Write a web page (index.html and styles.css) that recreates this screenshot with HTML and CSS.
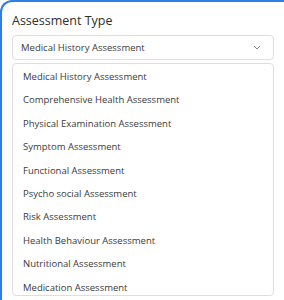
FILE: index.html
```html
<!DOCTYPE html>
<html>
<head>
<meta charset="utf-8">
<link rel="stylesheet" href="styles.css">
</head>
<body>
<div class="card">
  <div class="label">Assessment Type</div>
  <div class="select">
    <span class="value">Medical History Assessment</span>
    <svg class="chev" width="8" height="5" viewBox="0 0 8 5"><path d="M1 1 L4 4 L7 1" fill="none" stroke="#8a8a8a" stroke-width="1"/></svg>
  </div>
  <ul class="menu">
    <li>Medical History Assessment</li>
    <li>Comprehensive Health Assessment</li>
    <li>Physical Examination Assessment</li>
    <li>Symptom Assessment</li>
    <li>Functional Assessment</li>
    <li>Psycho social Assessment</li>
    <li>Risk Assessment</li>
    <li>Health Behaviour Assessment</li>
    <li>Nutritional Assessment</li>
    <li>Medication Assessment</li>
  </ul>
</div>
</body>
</html>
```
FILE: styles.css
```css
html, body { margin: 0; padding: 0; background: #fff; overflow: hidden; }
body { width: 284px; height: 300px; font-family: "Open Sans", "Noto Sans", sans-serif; }
.card {
  box-sizing: border-box;
  width: 320px;
  height: 340px;
  border-top: 2px solid #2f7ee8;
  border-left: 2px solid #2f7ee8;
  border-top-left-radius: 12px;
  padding: 11px 0 0 10px;
}
.label {
  font-size: 12.5px;
  font-weight: 500;
  color: #2e2e2e;
  line-height: 16px;
  height: 22px;
}
.select {
  box-sizing: border-box;
  width: 262px;
  height: 25px;
  border: 1px solid #dedede;
  border-radius: 4px;
  display: flex;
  align-items: center;
  justify-content: space-between;
  padding: 0 12px 0 8px;
  font-size: 9.5px;
  color: #3a3a3a;
}
.chev { margin-top: -1px; }
.menu {
  list-style: none;
  margin: 3px 0 0 0;
  padding: 1px 0 0 10px;
  box-sizing: border-box;
  width: 262px;
  height: 233px;
  border: 1px solid #dedede;
  border-radius: 4px;
  font-size: 9.5px;
  color: #3a3a3a;
}
.menu li {
  height: 23.4px;
  line-height: 23.4px;
}
```
